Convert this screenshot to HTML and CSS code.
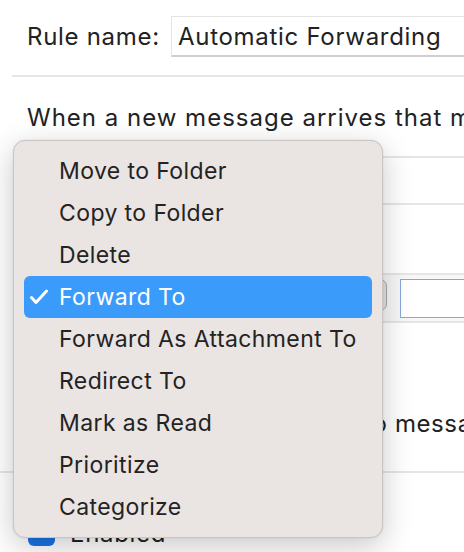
FILE: index.html
```html
<!DOCTYPE html>
<html>
<head>
<meta charset="utf-8">
<link rel="stylesheet" href="styles.css">
</head>
<body>
<div class="page">
  <div class="name-row">
    <span class="label">Rule name:</span>
    <div class="name-field">Automatic Forwarding</div>
  </div>
  <div class="sep"></div>
  <div class="when">When a new message arrives that matches all of these conditions:</div>
  <div class="cond-box">
    <div class="cond-row"></div>
  </div>
  <div class="do-label">Do the following:</div>
  <div class="action-box">
    <div class="popup">Forward To</div>
    <div class="addr-field"></div>
  </div>
  <div class="check-row noapply">
    <span class="checkbox off"></span>
    <span class="check-text">Do not apply other rules to messages that meet these criteria</span>
  </div>
  <div class="sep full"></div>
  <div class="check-row enabled">
    <span class="checkbox on"></span>
    <span class="check-text">Enabled</span>
  </div>
</div>

<div class="menu">
  <div class="item">Move to Folder</div>
  <div class="item">Copy to Folder</div>
  <div class="item">Delete</div>
  <div class="item selected">
    <svg class="check" width="20" height="16" viewBox="0 0 20 16"><polyline points="2.5,8.5 7,13.5 17.5,2" fill="none" stroke="#fff" stroke-width="3" stroke-linecap="round" stroke-linejoin="round"/></svg>
    Forward To
  </div>
  <div class="item">Forward As Attachment To</div>
  <div class="item">Redirect To</div>
  <div class="item">Mark as Read</div>
  <div class="item">Prioritize</div>
  <div class="item">Categorize</div>
</div>
</body>
</html>
```

FILE: styles.css
```css
html, body {
  margin: 0;
  padding: 0;
  background: #fff;
}
body {
  width: 464px;
  height: 552px;
  overflow: hidden;
  position: relative;
  font-family: "Inter", "Noto Sans", sans-serif;
  font-size: 24px;
  letter-spacing: 0.7px;
  color: #222;
}
.page {
  padding-top: 15px;
  width: 464px;
  overflow: hidden;
}
.name-row {
  display: flex;
  align-items: center;
  height: 42px;
  padding-left: 27px;
}
.label {
  width: 144px;
  flex: none;
  white-space: nowrap;
}
.name-field {
  flex: none;
  width: 300px;
  height: 41px;
  box-sizing: border-box;
  border: 1px solid #e4e4e4;
  border-right: none;
  border-bottom: 2px solid #cfcfcf;
  padding-left: 6px;
  line-height: 39px;
  white-space: nowrap;
}
.sep {
  margin-top: 18px;
  margin-left: 12px;
  border-top: 2px solid #e6e6e6;
}
.sep.full {
  margin-left: 0;
  margin-top: 34px;
}
.when {
  padding-left: 27px;
  margin-top: 27px;
  white-space: nowrap;
  line-height: 28px;
  letter-spacing: 1px;
}
.cond-box {
  margin-top: 24px;
  margin-left: 27px;
  border-top: 2px solid #e6e6e6;
  border-bottom: 2px solid #e6e6e6;
  height: 45px;
}
.do-label {
  padding-left: 27px;
  height: 68px;
  line-height: 68px;
}
.action-box {
  margin-left: 27px;
  border-top: 2px solid #e6e6e6;
  border-bottom: 2px solid #e6e6e6;
  background: #f7f7f7;
  height: 46px;
  display: flex;
  align-items: center;
  gap: 13px;
}
.popup {
  flex: none;
  width: 360px;
  height: 32px;
  box-sizing: border-box;
  border: 1.5px solid #a9a9a9;
  border-radius: 7px;
  background: #e4e4e4;
  margin-top: -6px;
  font-size: 22px;
  line-height: 29px;
  padding-left: 10px;
}
.addr-field {
  flex: none;
  width: 100px;
  height: 39px;
  box-sizing: border-box;
  border: 1.5px solid #86a6de;
  border-right: none;
  background: #fff;
}
.check-row {
  display: flex;
  align-items: center;
  padding-left: 28px;
  gap: 15px;
  white-space: nowrap;
}
.noapply {
  margin-top: 86px;
  height: 28px;
  gap: 15px;
}
.noapply .check-text {
  letter-spacing: 0.6px;
}
.enabled {
  margin-top: 46px;
  height: 28px;
}
.checkbox {
  flex: none;
  width: 27px;
  height: 26px;
  border-radius: 6px;
  box-sizing: border-box;
}
.checkbox.on {
  background: #1a73e8;
}
.checkbox.off {
  border: 1.5px solid #b0b0b0;
  background: #fff;
}

.menu {
  position: absolute;
  left: 13px;
  top: 140px;
  width: 370px;
  height: 398px;
  box-sizing: border-box;
  padding: 9px 10px;
  background: #eae4e2;
  border: 1px solid #c9c5c3;
  border-radius: 12px;
  box-shadow: 0 8px 30px rgba(0, 0, 0, 0.22), 0 0 2px rgba(0, 0, 0, 0.1);
  font-family: "Inter", "Noto Sans", sans-serif;
  font-size: 23px;
  letter-spacing: 0.4px;
  color: #232323;
}
.item {
  height: 42px;
  line-height: 43px;
  padding-left: 35px;
  border-radius: 6px;
  position: relative;
  white-space: nowrap;
}
.item.selected {
  background: #3a9bfa;
  color: #fff;
}
.check {
  position: absolute;
  left: 5px;
  top: 13px;
}
```
